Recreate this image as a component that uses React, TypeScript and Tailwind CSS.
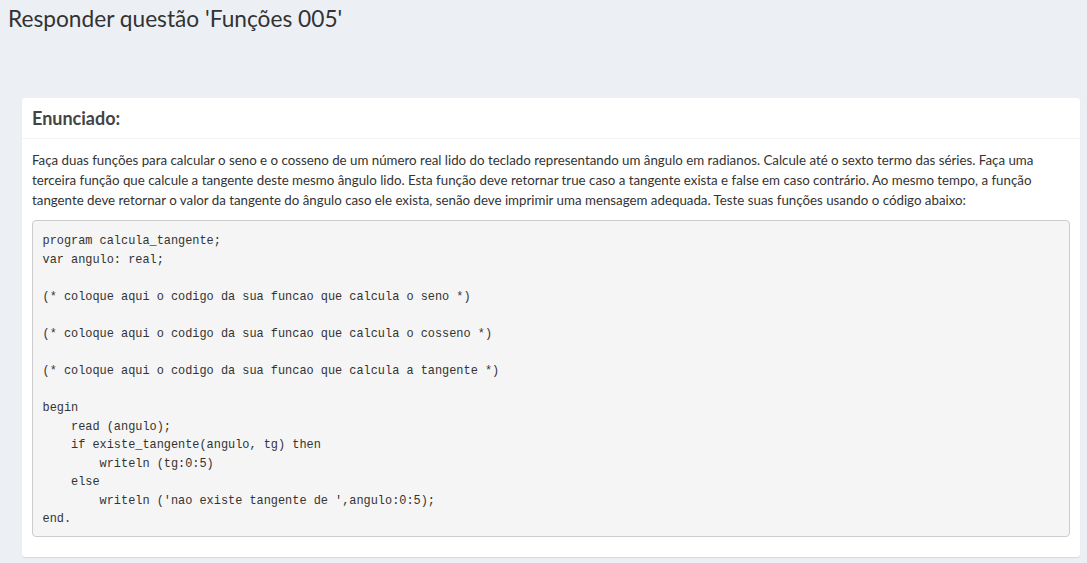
import React from "react";

const code = `program calcula_tangente;
var angulo: real;

(* coloque aqui o codigo da sua funcao que calcula o seno *)

(* coloque aqui o codigo da sua funcao que calcula o cosseno *)

(* coloque aqui o codigo da sua funcao que calcula a tangente *)

begin
    read (angulo);
    if existe_tangente(angulo, tg) then
        writeln (tg:0:5)
    else
        writeln ('nao existe tangente de ',angulo:0:5);
end.`;

export default function App() {
  return (
    <div
      className="w-[1087px] h-[563px] overflow-hidden bg-[#ecf0f5] text-[#333]"
      style={{ fontFamily: "Lato, 'Noto Sans', sans-serif" }}
    >
      <div className="pl-[8px] pt-[2px]">
        <h1 className="m-0 text-[22.7px] leading-[34px] font-normal text-[#333]">
          Responder questão 'Funções 005'
        </h1>
      </div>
      <div className="mt-[62px] ml-[22px] w-[1058px] bg-white rounded-[3px] shadow-[0_1px_1px_rgba(0,0,0,0.1)]">
        <div className="px-[10px] py-[10px] border-b border-[#f4f4f4]">
          <h3 className="m-0 text-[18px] leading-[20px] font-bold text-[#444]">Enunciado:</h3>
        </div>
        <div className="p-[10px] pt-[11px]">
          <p className="m-0 mb-[10px] text-[13.3px] leading-[20px] text-[#333] whitespace-nowrap">
            Faça duas funções para calcular o seno e o cosseno de um número real lido do teclado representando um ângulo em radianos. Calcule até o sexto termo das séries. Faça uma
            <br />
            terceira função que calcule a tangente deste mesmo ângulo lido. Esta função deve retornar true caso a tangente exista e false em caso contrário. Ao mesmo tempo, a função
            <br />
            tangente deve retornar o valor da tangente do ângulo caso ele exista, senão deve imprimir uma mensagem adequada. Teste suas funções usando o código abaixo:
          </p>
          <pre
            className="m-0 mb-[10px] px-[9.5px] pt-[11px] pb-[7px] bg-[#f5f5f5] border border-[#ccc] rounded-[4px] text-[11.9px] leading-[18.57px] text-[#333] whitespace-pre"
            style={{ fontFamily: "'Liberation Mono', 'DejaVu Sans Mono', monospace" }}
          >
            {code}
          </pre>
        </div>
      </div>
    </div>
  );
}
